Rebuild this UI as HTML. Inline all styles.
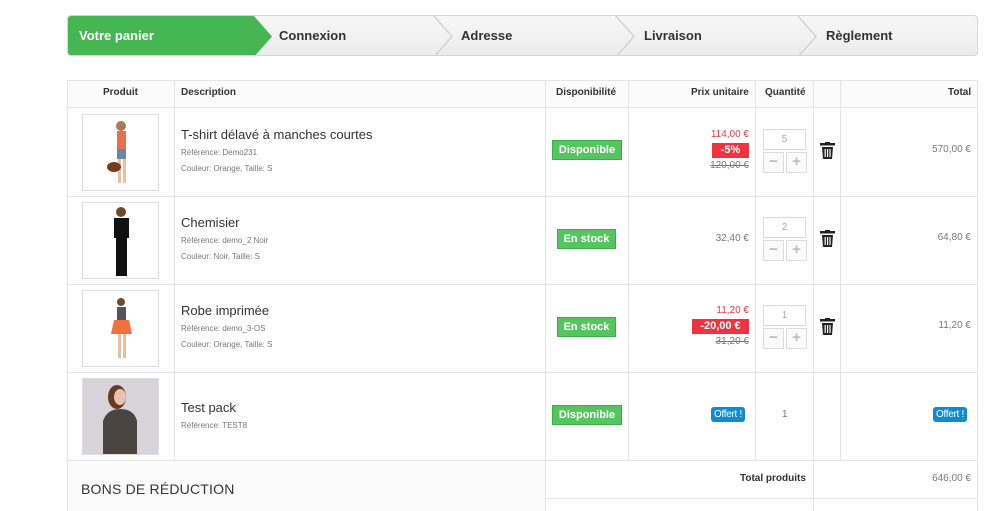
<!DOCTYPE html>
<html><head><meta charset="utf-8"><style>
*{margin:0;padding:0;box-sizing:border-box}
body{width:1000px;height:511px;overflow:hidden;background:#fff;font-family:"Liberation Sans",Arial,sans-serif;position:relative;color:#333}
.a{position:absolute}
.steps{left:67px;top:15px;width:911px;height:41px;border:1px solid #d6d4d4;border-radius:4px;background:linear-gradient(#f7f7f7,#ececec);overflow:hidden}
.st{position:absolute;top:0;height:41px;line-height:39px;font-weight:bold;font-size:13px;color:#333}
.chev{position:absolute;top:-1px;width:40px;height:41px}
.vl{position:absolute;width:1px;background:#e5e5e5}
.hl{position:absolute;height:1px;background:#e5e5e5}
.th{position:absolute;top:87px;font-size:10px;font-weight:bold;color:#333}
.img{position:absolute;left:82px;width:77px;height:77px;border:1px solid #ddd;background:#fff}
.t{position:absolute;left:181px;font-size:13px;color:#333}
.s{position:absolute;left:181px;font-size:8px;color:#777}
.badge{position:absolute;height:20px;line-height:18px;background:#55c65e;border:1px solid #36b040;color:#fff;font-size:11px;font-weight:bold;text-align:center}
.pr{position:absolute;right:251px;font-size:10px;color:#777;text-align:right}
.red{color:#f13340}
.disc{position:absolute;right:251px;height:15px;line-height:15px;background:#f13340;color:#fff;font-weight:bold;font-size:11px;text-align:center}
.qi{position:absolute;left:763px;width:43px;height:21px;border:1px solid #dbdbdb;color:#aaa;font-size:10px;text-align:center;line-height:19px}
.qb{position:absolute;width:21px;height:21px;border:1px solid #dbdbdb;background:#fafafa;color:#bbb;font-size:15px;text-align:center;line-height:18px;font-weight:bold}
.tot{position:absolute;right:29px;font-size:10px;color:#777}
.off{position:absolute;height:15px;line-height:15px;background:#0e8bd1;border-radius:3px;color:#fff;font-size:10px;padding:0 3px;letter-spacing:-.3px}
</style></head><body>
<div class="a steps">
  <div class="a" style="left:0;top:0;width:184px;height:41px;background:#46b653"></div>
  <svg class="a" style="left:183px;top:-1px" width="22" height="43"><polygon points="0,0 2,0 21,21.5 2,43 0,43" fill="#46b653"/></svg>
  <div class="st" style="left:11px;color:#fff">Votre panier</div>
  <div class="st" style="left:211px">Connexion</div>
  <svg class="a" style="left:364px;top:-1px" width="22" height="43"><polyline points="1,0 20,21.5 1,43" fill="none" stroke="#ccc" stroke-width="1.2"/></svg>
  <div class="st" style="left:393px">Adresse</div>
  <svg class="a" style="left:546px;top:-1px" width="22" height="43"><polyline points="1,0 20,21.5 1,43" fill="none" stroke="#ccc" stroke-width="1.2"/></svg>
  <div class="st" style="left:576px">Livraison</div>
  <svg class="a" style="left:728px;top:-1px" width="22" height="43"><polyline points="1,0 20,21.5 1,43" fill="none" stroke="#ccc" stroke-width="1.2"/></svg>
  <div class="st" style="left:758px">Règlement</div>
</div>

<div class="a" style="left:67px;top:80px;width:911px;height:27px;background:#fbfbfb"></div>
<div class="a" style="left:67px;top:460px;width:478px;height:51px;background:#fbfbfb"></div>
<div class="vl" style="left:67px;top:80px;height:431px"></div>
<div class="vl" style="left:174px;top:80px;height:380px"></div>
<div class="vl" style="left:545px;top:80px;height:431px"></div>
<div class="vl" style="left:628px;top:80px;height:380px"></div>
<div class="vl" style="left:755px;top:80px;height:380px"></div>
<div class="vl" style="left:813px;top:80px;height:431px"></div>
<div class="vl" style="left:840px;top:80px;height:380px"></div>
<div class="vl" style="left:977px;top:80px;height:431px"></div>
<div class="hl" style="left:67px;top:80px;width:911px"></div>
<div class="hl" style="left:67px;top:107px;width:911px"></div>
<div class="hl" style="left:67px;top:196px;width:911px"></div>
<div class="hl" style="left:67px;top:284px;width:911px"></div>
<div class="hl" style="left:67px;top:372px;width:911px"></div>
<div class="hl" style="left:67px;top:460px;width:911px"></div>
<div class="hl" style="left:545px;top:498px;width:433px"></div>

<div class="th" style="left:103px">Produit</div>
<div class="th" style="left:181px">Description</div>
<div class="th" style="left:556px">Disponibilité</div>
<div class="th" style="left:691px">Prix unitaire</div>
<div class="th" style="left:765px">Quantité</div>
<div class="th" style="left:948px">Total</div>

<!-- row1 -->
<div class="img" style="top:114px"><svg width="75" height="75"><circle cx="38" cy="11" r="5" fill="#b07850"/><rect x="34" y="16" width="9" height="18" fill="#e8704a"/><rect x="34" y="34" width="9" height="10" fill="#6688aa"/><rect x="35" y="44" width="3" height="24" fill="#e8c0a0"/><rect x="40" y="44" width="3" height="24" fill="#e8c0a0"/><ellipse cx="31" cy="52" rx="7" ry="5" fill="#7a3a20"/></svg></div>
<div class="t" style="top:127px">T-shirt délavé à manches courtes</div>
<div class="s" style="top:148px">Référence: Demo231</div>
<div class="s" style="top:164px">Couleur: Orange, Taille: S</div>
<div class="badge" style="left:552px;top:140px;width:70px">Disponible</div>
<div class="pr red" style="top:129px">114,00 €</div>
<div class="disc" style="top:143px;width:37px">-5%</div>
<div class="pr" style="top:160px;text-decoration:line-through">120,00 €</div>
<div class="qi" style="top:129px">5</div>
<div class="qb" style="left:763px;top:152px">−</div>
<div class="qb" style="left:786px;top:152px">+</div>
<svg class="a" style="left:820px;top:142px" width="15" height="17"><rect x="0" y="1" width="15" height="2.5" fill="#222"/><rect x="5" y="0" width="5" height="2" fill="#222"/><path d="M2 5h11l-1 12H3z" fill="#222"/><rect x="4.6" y="7" width="1.2" height="8" fill="#fff"/><rect x="7" y="7" width="1.2" height="8" fill="#fff"/><rect x="9.4" y="7" width="1.2" height="8" fill="#fff"/></svg>
<div class="tot" style="top:144px">570,00 €</div>

<!-- row2 -->
<div class="img" style="top:202px"><svg width="75" height="75"><circle cx="38" cy="9" r="5" fill="#6b4a30"/><rect x="31" y="15" width="15" height="20" fill="#111"/><rect x="33" y="35" width="11" height="38" fill="#111"/></svg></div>
<div class="t" style="top:215px">Chemisier</div>
<div class="s" style="top:236px">Référence: demo_2 Noir</div>
<div class="s" style="top:252px">Couleur: Noir, Taille: S</div>
<div class="badge" style="left:557px;top:229px;width:59px">En stock</div>
<div class="pr" style="top:233px">32,40 €</div>
<div class="qi" style="top:217px">2</div>
<div class="qb" style="left:763px;top:240px">−</div>
<div class="qb" style="left:786px;top:240px">+</div>
<svg class="a" style="left:820px;top:230px" width="15" height="17"><rect x="0" y="1" width="15" height="2.5" fill="#222"/><rect x="5" y="0" width="5" height="2" fill="#222"/><path d="M2 5h11l-1 12H3z" fill="#222"/><rect x="4.6" y="7" width="1.2" height="8" fill="#fff"/><rect x="7" y="7" width="1.2" height="8" fill="#fff"/><rect x="9.4" y="7" width="1.2" height="8" fill="#fff"/></svg>
<div class="tot" style="top:232px">64,80 €</div>

<!-- row3 -->
<div class="img" style="top:290px"><svg width="75" height="75"><circle cx="38" cy="11" r="4" fill="#6b4a30"/><rect x="34" y="16" width="9" height="13" fill="#555"/><path d="M31 29h15l3 14H28z" fill="#f07040"/><rect x="35" y="43" width="3" height="24" fill="#e8c0a0"/><rect x="40" y="43" width="3" height="24" fill="#e8c0a0"/></svg></div>
<div class="t" style="top:303px">Robe imprimée</div>
<div class="s" style="top:324px">Référence: demo_3-OS</div>
<div class="s" style="top:340px">Couleur: Orange, Taille: S</div>
<div class="badge" style="left:557px;top:317px;width:59px">En stock</div>
<div class="pr red" style="top:305px">11,20 €</div>
<div class="disc" style="top:319px;width:57px">-20,00 €</div>
<div class="pr" style="top:336px;text-decoration:line-through">31,20 €</div>
<div class="qi" style="top:305px">1</div>
<div class="qb" style="left:763px;top:328px">−</div>
<div class="qb" style="left:786px;top:328px">+</div>
<svg class="a" style="left:820px;top:318px" width="15" height="17"><rect x="0" y="1" width="15" height="2.5" fill="#222"/><rect x="5" y="0" width="5" height="2" fill="#222"/><path d="M2 5h11l-1 12H3z" fill="#222"/><rect x="4.6" y="7" width="1.2" height="8" fill="#fff"/><rect x="7" y="7" width="1.2" height="8" fill="#fff"/><rect x="9.4" y="7" width="1.2" height="8" fill="#fff"/></svg>
<div class="tot" style="top:320px">11,20 €</div>

<!-- row4 -->
<div class="img" style="top:378px;background:#d6d4d8"><svg width="75" height="75"><ellipse cx="34" cy="18" rx="9" ry="12" fill="#6b3a25"/><ellipse cx="37" cy="18" rx="6" ry="8" fill="#e8c4b0"/><path d="M20 75V42q4-12 17-12q14 0 17 12V75z" fill="#4a4540"/></svg></div>
<div class="t" style="top:400px">Test pack</div>
<div class="s" style="top:421px">Référence: TEST8</div>
<div class="badge" style="left:552px;top:405px;width:70px">Disponible</div>
<div class="off" style="left:711px;top:407px">Offert !</div>
<div class="a" style="left:782px;top:409px;font-size:10px;color:#777">1</div>
<div class="off" style="left:933px;top:407px">Offert !</div>

<div class="a" style="left:81px;top:481px;font-size:14px;color:#333;letter-spacing:.2px">BONS DE RÉDUCTION</div>
<div class="a" style="left:740px;top:473px;font-size:10px;font-weight:bold;color:#333">Total produits</div>
<div class="tot" style="top:473px">646,00 €</div>
</body></html>
